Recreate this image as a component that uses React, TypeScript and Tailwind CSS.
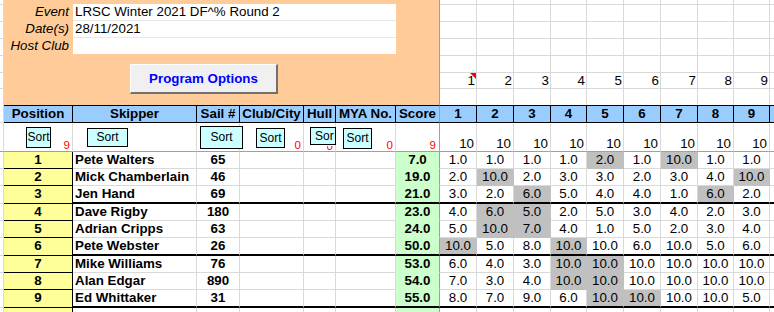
import React from "react";

const COLS =
  "grid grid-cols-[4px_69px_124px_43px_64px_32px_60px_44px_37px_37px_37px_36px_37px_37px_37px_36px_36px_1fr]";
const RCOLS = "grid grid-cols-[37px_37px_37px_36px_37px_37px_37px_36px_36px_1fr]";

const TOP_H = ["h-[5px]", "h-[17px]", "h-[17px]", "h-[17px]", "h-[17px]", "h-[16px]", "h-[16px]"];
const ROW_H = ["h-[17px]", "h-[17px]", "h-[18px]", "h-[17px]", "h-[17px]", "h-[18px]", "h-[17px]", "h-[17px]", "h-[18px]"];

type Row = { pos: number; name: string; sail: string; score: string; r: string[]; g: number[] };

const ROWS: Row[] = [
  { pos: 1, name: "Pete Walters", sail: "65", score: "7.0", r: ["1.0", "1.0", "1.0", "1.0", "2.0", "1.0", "10.0", "1.0", "1.0"], g: [4, 6] },
  { pos: 2, name: "Mick Chamberlain", sail: "46", score: "19.0", r: ["2.0", "10.0", "2.0", "3.0", "3.0", "2.0", "3.0", "4.0", "10.0"], g: [1, 8] },
  { pos: 3, name: "Jen Hand", sail: "69", score: "21.0", r: ["3.0", "2.0", "6.0", "5.0", "4.0", "4.0", "1.0", "6.0", "2.0"], g: [2, 7] },
  { pos: 4, name: "Dave Rigby", sail: "180", score: "23.0", r: ["4.0", "6.0", "5.0", "2.0", "5.0", "3.0", "4.0", "2.0", "3.0"], g: [1, 2] },
  { pos: 5, name: "Adrian Cripps", sail: "63", score: "24.0", r: ["5.0", "10.0", "7.0", "4.0", "1.0", "5.0", "2.0", "3.0", "4.0"], g: [1, 2] },
  { pos: 6, name: "Pete Webster", sail: "26", score: "50.0", r: ["10.0", "5.0", "8.0", "10.0", "10.0", "6.0", "10.0", "5.0", "6.0"], g: [0, 3] },
  { pos: 7, name: "Mike Williams", sail: "76", score: "53.0", r: ["6.0", "4.0", "3.0", "10.0", "10.0", "10.0", "10.0", "10.0", "10.0"], g: [3, 4] },
  { pos: 8, name: "Alan Edgar", sail: "890", score: "54.0", r: ["7.0", "3.0", "4.0", "10.0", "10.0", "10.0", "10.0", "10.0", "10.0"], g: [3, 4] },
  { pos: 9, name: "Ed Whittaker", sail: "31", score: "55.0", r: ["8.0", "7.0", "9.0", "6.0", "10.0", "10.0", "10.0", "10.0", "5.0"], g: [4, 5] },
];

const GR = "border-r border-r-[#d9d9d9]";
const GB = "border-b border-b-[#d9d9d9]";
const FRZ_R = "border-r border-r-[#a0a0a0]";

function SortBtn({ cls, label = "Sort", left = false }: { cls: string; label?: string; left?: boolean }) {
  return (
    <div
      className={`absolute z-10 flex items-center overflow-hidden border border-black bg-[#ccffff] text-[12px] leading-[13px] text-black ${
        left ? "justify-start pl-[4px]" : "justify-center"
      } ${cls}`}
    >
      {label}
    </div>
  );
}

function RedNum({ v, pr }: { v: string; pr: string }) {
  return (
    <div className={`absolute bottom-0 right-0 text-[11.5px] leading-[12px] text-[#ff0000] ${pr}`}>{v}</div>
  );
}

export default function App() {
  const headers = ["Position", "Skipper", "Sail #", "Club/City", "Hull", "MYA No.", "Score", "1", "2", "3", "4", "5", "6", "7", "8", "9"];

  return (
    <div className="h-[312px] w-[774px] overflow-hidden bg-white font-['Liberation_Sans',Arial,sans-serif] text-[13.33px] text-black">
      {/* Top area */}
      <div className="flex h-[105px]">
        <div className="flex w-[4px] flex-col">
          {TOP_H.map((h, i) => (
            <div key={i} className={`${h} ${GR} ${i < 6 ? GB : ""}`} />
          ))}
        </div>
        <div className={`w-[436px] bg-[#ffcc99] pt-[4px] ${FRZ_R}`}>
          {[
            ["Event", "LRSC Winter 2021 DF^% Round 2"],
            ["Date(s)", "28/11/2021"],
            ["Host Club", ""],
          ].map(([l, v], i) => (
            <div key={l} className={`grid grid-cols-[69px_323px] ${i < 2 ? "h-[17px]" : "h-[16px]"}`}>
              <div className="whitespace-nowrap pr-[4px] text-right italic leading-[16px]">{l}</div>
              <div className={`bg-white pl-[2px] leading-[16px] ${i < 2 ? "border-b border-b-[#e8e8e8]" : ""}`}>{v}</div>
            </div>
          ))}
          <div className="ml-[126px] mt-[10px] flex h-[30px] w-[148px] items-center justify-center border-l border-t border-b-2 border-r-2 border-l-white border-t-white border-b-[#707070] border-r-[#707070] bg-[#f0f0f0] font-bold text-[#0000ff]">
            Program Options
          </div>
        </div>
        <div className="flex flex-1 flex-col">
          {TOP_H.map((h, ri) => (
            <div key={ri} className={`${RCOLS} ${h}`}>
              {Array.from({ length: 10 }).map((_, ci) => (
                <div
                  key={ci}
                  className={`relative flex items-center justify-end pr-[1px] leading-[15px] ${ci < 9 ? GR : ""} ${ri < 6 ? GB : ""}`}
                >
                  {ri === 5 && ci < 9 ? String(ci + 1) : ""}
                  {ri === 5 && ci === 0 ? (
                    <div className="absolute right-0 top-0 h-0 w-0 border-l-[6px] border-t-[6px] border-l-transparent border-t-[#ff0000]" />
                  ) : null}
                </div>
              ))}
            </div>
          ))}
        </div>
      </div>

      {/* Header row */}
      <div className={`${COLS} h-[18px]`}>
        <div className={`${GR} ${GB}`} />
        {headers.map((h, i) => (
          <div
            key={h}
            className={`overflow-hidden whitespace-nowrap border-y border-y-black bg-[#99ccff] text-center font-bold leading-[16px] ${
              i === 6 ? FRZ_R : "border-r border-r-black"
            }`}
          >
            {h}
          </div>
        ))}
        <div className="border-y border-y-black bg-[#99ccff]" />
      </div>

      {/* Sort row */}
      <div className={`${COLS} h-[29px]`}>
        <div className={`${GR} border-b border-b-[#a0a0a0]`} />
        <div className={`relative ${GR} border-b border-b-[#a0a0a0]`}>
          <SortBtn cls="left-[22px] top-[4px] h-[21px] w-[25px]" />
          <RedNum v="9" pr="pr-[2px]" />
        </div>
        <div className={`relative ${GR} border-b border-b-[#a0a0a0]`}>
          <SortBtn cls="left-[14px] top-[5px] h-[19px] w-[41px]" />
        </div>
        <div className={`relative ${GR} border-b border-b-[#a0a0a0]`}>
          <SortBtn cls="left-[3px] top-[3px] h-[23px] w-[43px]" />
        </div>
        <div className={`relative ${GR} border-b border-b-[#a0a0a0]`}>
          <SortBtn cls="left-[16px] top-[5px] h-[20px] w-[29px]" />
          <RedNum v="0" pr="pr-[2px]" />
        </div>
        <div className={`relative ${GR} border-b border-b-[#a0a0a0]`}>
          <div className="absolute bottom-0 right-0 h-[5px] overflow-hidden pr-[2px] text-[11.5px] leading-[10px] text-[#ff0000]">
            <div className="-mt-[5px]">0</div>
          </div>
          <SortBtn cls="left-[6px] top-[4px] h-[18px] w-[26px]" label="Sor" left />
        </div>
        <div className={`relative ${GR} border-b border-b-[#a0a0a0]`}>
          <SortBtn cls="left-[7px] top-[5px] h-[21px] w-[29px]" />
          <RedNum v="0" pr="pr-[2px]" />
        </div>
        <div className={`relative ${FRZ_R} border-b border-b-[#a0a0a0]`}>
          <RedNum v="9" pr="pr-[3px]" />
        </div>
        {Array.from({ length: 9 }).map((_, i) => (
          <div key={i} className={`flex items-end justify-end pr-[2px] leading-[14px] ${GR} border-b border-b-[#a0a0a0]`}>
            10
          </div>
        ))}
        <div className="border-b border-b-[#a0a0a0]" />
      </div>

      {/* Data rows */}
      {ROWS.map((row, ri) => {
        const thick = ri % 3 === 2;
        const bot = thick ? "border-b-2 border-b-black" : GB;
        return (
          <div key={row.pos} className={`${COLS} ${ROW_H[ri]}`}>
            <div className={`${GR} ${GB}`} />
            <div className="border-b border-r border-b-black border-r-black bg-[#ffff99] text-center font-bold leading-[16px]">
              {row.pos}
            </div>
            <div className={`overflow-hidden whitespace-nowrap pl-[2px] font-bold leading-[16px] ${GR} ${bot}`}>{row.name}</div>
            <div className={`text-center font-bold leading-[16px] ${GR} ${bot}`}>{row.sail}</div>
            <div className={`${GR} ${bot}`} />
            <div className={`${GR} ${bot}`} />
            <div className={`${GR} ${bot}`} />
            <div
              className={`bg-[#ccffcc] text-center font-bold leading-[16px] ${FRZ_R} ${
                thick ? "border-b-2 border-b-black" : "border-b border-b-[#ccffcc]"
              }`}
            >
              {row.score}
            </div>
            {row.r.map((v, ci) => {
              const gray = row.g.includes(ci);
              return (
                <div
                  key={ci}
                  className={`text-center leading-[16px] ${gray ? "border-r border-r-[#c0c0c0] bg-[#c0c0c0]" : GR} ${
                    thick ? "border-b-2 border-b-black" : gray ? "border-b border-b-[#c0c0c0]" : GB
                  }`}
                >
                  {v}
                </div>
              );
            })}
            <div className={bot} />
          </div>
        );
      })}

      {/* Partial row after */}
      <div className={`${COLS} h-[17px]`}>
        <div className={`${GR} ${GB}`} />
        <div className="border-b border-r border-b-black border-r-black bg-[#ffff99]" />
        <div className={`${GR} ${GB}`} />
        <div className={`${GR} ${GB}`} />
        <div className={`${GR} ${GB}`} />
        <div className={`${GR} ${GB}`} />
        <div className={`${GR} ${GB}`} />
        <div className={`bg-[#ccffcc] ${FRZ_R}`} />
        {Array.from({ length: 9 }).map((_, i) => (
          <div key={i} className={`${GR} ${GB}`} />
        ))}
        <div className={GB} />
      </div>
    </div>
  );
}
